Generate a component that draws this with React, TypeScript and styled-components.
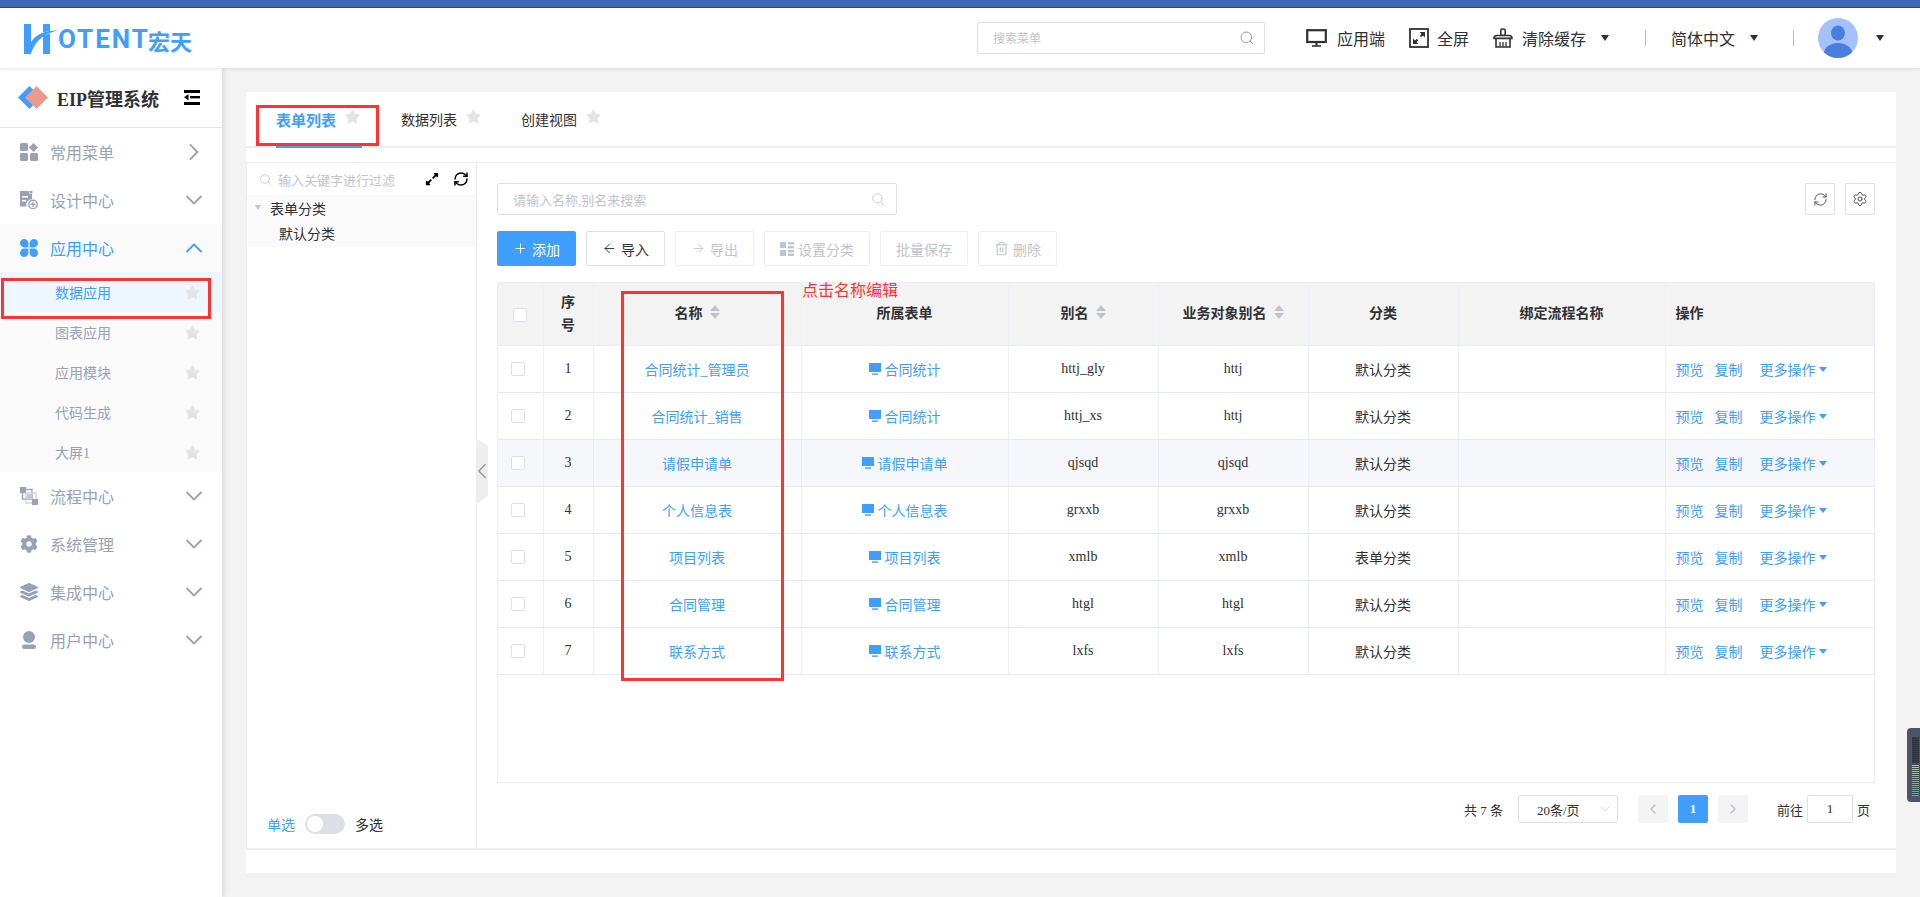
import React from "react";
import styled, { createGlobalStyle } from "styled-components";
import {
  ArrowLeft,
  ArrowRight,
  ChevronDown,
  ChevronLeft,
  ChevronRight,
  ChevronUp,
  Plus,
  RefreshCw,
  Search,
  Settings,
  Trash2,
} from "lucide-react";
import { FaCog, FaExpandAlt, FaLayerGroup, FaStar } from "react-icons/fa";

const GlobalStyle = createGlobalStyle`
  html, body {
    margin: 0;
    padding: 0;
    background: #f3f3f3;
    overflow: hidden;
  }
  * {
    box-sizing: border-box;
  }
  body {
    font-family: "Liberation Serif", "Noto Sans CJK SC", serif;
    font-size: 14px;
    color: #303133;
  }
`;

const rows = [
  { no: 1, name: "合同统计_管理员", form: "合同统计", alias: "httj_gly", biz: "httj", cat: "默认分类" },
  { no: 2, name: "合同统计_销售", form: "合同统计", alias: "httj_xs", biz: "httj", cat: "默认分类" },
  { no: 3, name: "请假申请单", form: "请假申请单", alias: "qjsqd", biz: "qjsqd", cat: "默认分类", hover: true },
  { no: 4, name: "个人信息表", form: "个人信息表", alias: "grxxb", biz: "grxxb", cat: "默认分类" },
  { no: 5, name: "项目列表", form: "项目列表", alias: "xmlb", biz: "xmlb", cat: "表单分类" },
  { no: 6, name: "合同管理", form: "合同管理", alias: "htgl", biz: "htgl", cat: "默认分类" },
  { no: 7, name: "联系方式", form: "联系方式", alias: "lxfs", biz: "lxfs", cat: "默认分类" },
];

const CommonIcon = () => (
  <svg width="18" height="18" viewBox="0 0 18 18" fill="#98a1b5">
    <rect x="0" y="0" width="8" height="8" rx="1.5" />
    <path d="M13.5 0 18 4.5 13.5 9 9 4.5Z" />
    <rect x="0" y="10" width="8" height="8" rx="1.5" />
    <rect x="10" y="10" width="8" height="8" rx="1.5" />
  </svg>
);

const DesignIcon = () => (
  <svg width="18" height="18" viewBox="0 0 18 18" fill="#98a1b5">
    <path d="M0 0H9V2.5H12V8.2A5.5 5.5 0 0 0 6.6 15.5H0Z" />
    <rect x="9.5" y="0" width="3" height="2" />
    <rect x="2" y="5" width="6" height="1.6" fill="#fff" />
    <rect x="2" y="9" width="4" height="1.6" fill="#fff" />
    <circle cx="13" cy="13.4" r="4.2" fill="#fff" stroke="#98a1b5" strokeWidth="1.4" />
    <path d="M13 11v5M10.6 13.4h4.8" stroke="#98a1b5" strokeWidth="1.3" />
  </svg>
);

const AppIcon = () => (
  <svg width="18" height="18" viewBox="0 0 18 18" fill="#409eff">
    <path d="M4 0C6.4 0 8.4 2 8.4 4.2V8.4H4.2C2 8.4 0 6.4 0 4 0 1.8 1.8 0 4 0Z" />
    <path d="M14 0C11.6 0 9.6 2 9.6 4.2V8.4H13.8C16 8.4 18 6.4 18 4 18 1.8 16.2 0 14 0Z" />
    <path d="M4 18C6.4 18 8.4 16 8.4 13.8V9.6H4.2C2 9.6 0 11.6 0 14 0 16.2 1.8 18 4 18Z" />
    <path d="M14 18C11.6 18 9.6 16 9.6 13.8V9.6H13.8C16 9.6 18 11.6 18 14 18 16.2 16.2 18 14 18Z" />
  </svg>
);

const FlowIcon = () => (
  <svg width="18" height="18" viewBox="0 0 18 18" fill="none">
    <rect x="0" y="0" width="6" height="6" fill="#98a1b5" />
    <rect x="2.5" y="2.5" width="9.5" height="9.5" stroke="#98a1b5" strokeWidth="1.4" />
    <rect x="7" y="7" width="5" height="5" fill="#c5cad6" />
    <rect x="6" y="6" width="10" height="10" stroke="#c5cad6" strokeWidth="1.2" />
    <rect x="12" y="12" width="6" height="6" fill="#98a1b5" />
  </svg>
);

const UserIcon = () => (
  <svg width="18" height="18" viewBox="0 0 18 18" fill="#98a1b5">
    <circle cx="9" cy="6" r="6" />
    <rect x="2" y="13.4" width="14" height="4.6" rx="2.3" />
  </svg>
);

const LogoH = () => (
  <svg width="34" height="30" viewBox="0 0 34 30" fill="#409eff">
    <path d="M0 0H7V30H0Z" />
    <path d="M7 18C12 10 22 6 34 6.5C26 8 12 13 7 30Z" />
    <path d="M19 0H26V7L19 8.6Z" />
    <path d="M19 11.4 26 9.4V30H19Z" />
  </svg>
);

const Diamonds = () => (
  <svg width="30" height="23" viewBox="0 0 30 23">
    <path d="M11.5 0 23 11.5 11.5 23 0 11.5Z" fill="#409eff" />
    <path d="M18.5 0 30 11.5 18.5 23 7 11.5Z" fill="#eb9a8e" />
  </svg>
);

const FoldIcon = () => (
  <svg width="16" height="15" viewBox="0 0 16 15" fill="#000">
    <rect x="0" y="0" width="16" height="3" />
    <rect x="6" y="6" width="10" height="2.4" />
    <path d="M0 7.2 4.5 4V10.4Z" />
    <rect x="0" y="12" width="16" height="3" />
  </svg>
);

const MonitorIcon = () => (
  <svg width="21" height="18" viewBox="0 0 21 18" fill="none">
    <rect x="1.2" y="1.2" width="18.6" height="11.8" stroke="#303133" strokeWidth="2.2" />
    <path d="M10.5 14v2.5" stroke="#303133" strokeWidth="2.2" />
    <path d="M6 17h9" stroke="#303133" strokeWidth="1.6" />
  </svg>
);

const FullIcon = () => (
  <svg width="20" height="20" viewBox="0 0 20 20" fill="none">
    <rect x="1" y="1" width="18" height="18" stroke="#303133" strokeWidth="1.8" />
    <path d="M8.5 11.5 5.5 14.5M11.5 8.5l3-3" stroke="#303133" strokeWidth="2" />
    <path d="M4 10.5V16H9.5ZM16 9.5V4H10.5Z" fill="#303133" />
  </svg>
);

const BrushIcon = () => (
  <svg width="20" height="20" viewBox="0 0 20 20" fill="none" stroke="#303133" strokeWidth="1.6">
    <rect x="7.8" y="1" width="4.4" height="6.5" rx="1.6" />
    <path d="M1 10.4C1 8.4 2.4 7.5 4 7.5H16C17.6 7.5 19 8.4 19 10.4Z" fill="#fff" />
    <path d="M3 10.4V19H17V10.4" />
    <path d="M7 14V18.5M10 14V18.5M13 14V18.5" strokeWidth="1.3" />
  </svg>
);

const AvatarIcon = () => (
  <svg width="40" height="40" viewBox="0 0 40 40">
    <clipPath id="avatarClip">
      <circle cx="20" cy="20" r="20" />
    </clipPath>
    <g clipPath="url(#avatarClip)">
      <rect width="40" height="40" fill="#a3c2fb" />
      <ellipse cx="20" cy="15" rx="7" ry="7.5" fill="#4a7de0" />
      <ellipse cx="20" cy="35" rx="14" ry="10" fill="#4a7de0" />
    </g>
  </svg>
);

const GridIcon = () => (
  <svg width="14" height="14" viewBox="0 0 14 14" fill="#c0c4cc">
    <rect x="0" y="0" width="6" height="6" />
    <rect x="0" y="8" width="6" height="6" />
    <rect x="8" y="0" width="6" height="2.4" />
    <rect x="8" y="4" width="6" height="2.4" />
    <rect x="8" y="8" width="6" height="2.4" />
    <rect x="8" y="11.6" width="6" height="2.4" />
  </svg>
);

const ScreenIcon = () => (
  <svg width="12" height="12" viewBox="0 0 12 12" fill="#409eff">
    <rect x="0" y="0" width="12" height="9" />
    <rect x="3" y="10.4" width="6" height="1.4" />
  </svg>
);

const menuTop = [
  { label: "常用菜单", icon: <CommonIcon />, arrow: "right" },
  { label: "设计中心", icon: <DesignIcon />, arrow: "down" },
  { label: "应用中心", icon: <AppIcon />, arrow: "up", active: true },
];

const menuSub = ["数据应用", "图表应用", "应用模块", "代码生成", "大屏1"];

const menuBottom = [
  { label: "流程中心", icon: <FlowIcon /> },
  { label: "系统管理", icon: <FaCog size={18} color="#98a1b5" /> },
  { label: "集成中心", icon: <FaLayerGroup size={18} color="#98a1b5" /> },
  { label: "用户中心", icon: <UserIcon /> },
];

const App = () => {
  return (
    <Page>
      <GlobalStyle />
      <TopStrip />
      <Header>
        <Logo>
          <LogoH />
          <LogoLatin>OTENT</LogoLatin>
          <LogoCjk>宏天</LogoCjk>
        </Logo>
        <HeaderRight>
          <MenuSearch>
            <span>搜索菜单</span>
            <Search size={16} color="#909399" strokeWidth={1.4} />
          </MenuSearch>
          <HeaderItem $left={41} $gap={10}>
            <MonitorIcon />
            应用端
          </HeaderItem>
          <HeaderItem $left={24} $gap={8}>
            <FullIcon />
            全屏
          </HeaderItem>
          <HeaderItem $left={24} $gap={9}>
            <BrushIcon />
            清除缓存
          </HeaderItem>
          <HeaderCaret $left={15} />
          <HeaderDivider $left={36} />
          <HeaderItem $left={25} $gap={0}>
            简体中文
          </HeaderItem>
          <HeaderCaret $left={15} />
          <HeaderDivider $left={35} />
          <AvatarBox>
            <AvatarIcon />
          </AvatarBox>
          <HeaderCaret $left={18} />
        </HeaderRight>
      </Header>
      <Body>
        <Sidebar>
          <SideTitle>
            <Diamonds />
            <SideName>EIP管理系统</SideName>
            <FoldIcon />
          </SideTitle>
          {menuTop.map((m) => (
            <MenuRow key={m.label} $active={m.active}>
              <MenuIcon>{m.icon}</MenuIcon>
              <MenuLabel>{m.label}</MenuLabel>
              <MenuArrow $active={m.active}>
                {m.arrow === "right" && <ChevronRight size={28} strokeWidth={1.6} />}
                {m.arrow === "down" && <ChevronDown size={28} strokeWidth={1.6} />}
                {m.arrow === "up" && <ChevronUp size={28} strokeWidth={1.6} />}
              </MenuArrow>
            </MenuRow>
          ))}
          <SubMenu>
            {menuSub.map((s, i) => (
              <SubRow key={s} $active={i === 0}>
                <SubLabel>{s}</SubLabel>
                <FaStar size={15} color="#e3e3e3" />
                {i === 0 && <SideRedBox />}
              </SubRow>
            ))}
          </SubMenu>
          {menuBottom.map((m) => (
            <MenuRow key={m.label}>
              <MenuIcon>{m.icon}</MenuIcon>
              <MenuLabel>{m.label}</MenuLabel>
              <MenuArrow>
                <ChevronDown size={28} strokeWidth={1.6} />
              </MenuArrow>
            </MenuRow>
          ))}
        </Sidebar>
        <Main>
          <Panel>
            <Tabs>
              <Tab $active>
                表单列表
                <FaStar size={15} color="#e3e3e3" />
                <TabRedBox />
              </Tab>
              <Tab>
                数据列表
                <FaStar size={15} color="#e3e3e3" />
              </Tab>
              <Tab>
                创建视图
                <FaStar size={15} color="#e3e3e3" />
              </Tab>
            </Tabs>
            <Split>
              <TreePane>
                <TreeSearch>
                  <Search size={13} color="#c0c4cc" strokeWidth={1.5} />
                  <TreePlaceholder>输入关键字进行过滤</TreePlaceholder>
                  <FaExpandAlt size={14} color="#000" />
                  <RefreshCw size={16} color="#000" strokeWidth={2.2} />
                </TreeSearch>
                <TreeList>
                  <TreeNode>
                    <TreeCaret />
                    表单分类
                  </TreeNode>
                  <TreeChild>默认分类</TreeChild>
                </TreeList>
                <SwitchRow>
                  <SwitchLabel $on>单选</SwitchLabel>
                  <SwitchTrack>
                    <SwitchKnob />
                  </SwitchTrack>
                  <SwitchLabel>多选</SwitchLabel>
                </SwitchRow>
                <Collapse>
                  <ChevronLeft size={26} color="#999" strokeWidth={1.3} />
                </Collapse>
              </TreePane>
              <ListPane>
                <SearchRow>
                  <ListSearch>
                    <span>请输入名称,别名来搜索</span>
                    <Search size={14} color="#c0c4cc" strokeWidth={1.5} />
                  </ListSearch>
                  <ToolButton>
                    <RefreshCw size={15} color="#505255" strokeWidth={1.6} />
                  </ToolButton>
                  <ToolButton>
                    <Settings size={16} color="#505255" strokeWidth={1.5} />
                  </ToolButton>
                </SearchRow>
                <ActionRow>
                  <ActionButton $kind="primary">
                    <Plus size={15} strokeWidth={1.6} />
                    添加
                  </ActionButton>
                  <ActionButton $kind="plain">
                    <ArrowLeft size={15} strokeWidth={1.5} />
                    导入
                  </ActionButton>
                  <ActionButton>
                    <ArrowRight size={15} strokeWidth={1.5} />
                    导出
                  </ActionButton>
                  <ActionButton>
                    <GridIcon />
                    设置分类
                  </ActionButton>
                  <ActionButton>批量保存</ActionButton>
                  <ActionButton>
                    <Trash2 size={15} strokeWidth={1.8} />
                    删除
                  </ActionButton>
                </ActionRow>
                <TableFrame>
                  <Table>
                    <colgroup>
                      <col style={{ width: 45 }} />
                      <col style={{ width: 50 }} />
                      <col style={{ width: 208 }} />
                      <col style={{ width: 207 }} />
                      <col style={{ width: 150 }} />
                      <col style={{ width: 150 }} />
                      <col style={{ width: 150 }} />
                      <col style={{ width: 207 }} />
                      <col />
                    </colgroup>
                    <thead>
                      <tr>
                        <Th>
                          <Check $head />
                        </Th>
                        <Th>
                          序<br />号
                        </Th>
                        <Th>
                          名称
                          <SortIcon />
                        </Th>
                        <Th>所属表单</Th>
                        <Th>
                          别名
                          <SortIcon />
                        </Th>
                        <Th>
                          业务对象别名
                          <SortIcon />
                        </Th>
                        <Th>分类</Th>
                        <Th>绑定流程名称</Th>
                        <Th $left>操作</Th>
                      </tr>
                    </thead>
                    <tbody>
                      {rows.map((r) => (
                        <Tr key={r.no} $hover={r.hover}>
                          <Td>
                            <Check />
                          </Td>
                          <Td>{r.no}</Td>
                          <Td>
                            <LinkText>{r.name}</LinkText>
                          </Td>
                          <Td>
                            <FormLink>
                              <ScreenIcon />
                              {r.form}
                            </FormLink>
                          </Td>
                          <Td>{r.alias}</Td>
                          <Td>{r.biz}</Td>
                          <Td>{r.cat}</Td>
                          <Td />
                          <Td $left>
                            <OpLinks>
                              <LinkText>预览</LinkText>
                              <LinkText>复制</LinkText>
                              <MoreLink>
                                更多操作
                                <BlueCaret />
                              </MoreLink>
                            </OpLinks>
                          </Td>
                        </Tr>
                      ))}
                    </tbody>
                  </Table>
                  <NameRedBox />
                  <RedNote>点击名称编辑</RedNote>
                </TableFrame>
                <Pager>
                  <PagerText>共 7 条</PagerText>
                  <SizeSelect>
                    <span>20条/页</span>
                    <ChevronDown size={14} color="#c0c4cc" strokeWidth={1.4} />
                  </SizeSelect>
                  <PageBtn>
                    <ChevronLeft size={16} color="#c0c4cc" strokeWidth={2.4} />
                  </PageBtn>
                  <PageBtn $active>1</PageBtn>
                  <PageBtn>
                    <ChevronRight size={16} color="#c0c4cc" strokeWidth={2.4} />
                  </PageBtn>
                  <PagerGoto>前往</PagerGoto>
                  <PageInput>1</PageInput>
                  <PagerText>页</PagerText>
                </Pager>
              </ListPane>
            </Split>
          </Panel>
        </Main>
      </Body>
      <FloatMeter>
        <MeterBars />
      </FloatMeter>
    </Page>
  );
};

const Page = styled.div`
  width: 1920px;
  height: 897px;
  display: flex;
  flex-direction: column;
  overflow: hidden;
`;

const TopStrip = styled.div`
  height: 8px;
  background: #3f67b5;
  border-bottom: 1px solid #234a93;
`;

const Header = styled.header`
  position: relative;
  z-index: 2;
  height: 60px;
  display: flex;
  align-items: center;
  justify-content: space-between;
  padding: 0 36px 0 24px;
  background: #fff;
  box-shadow: 0 1px 4px rgba(0, 0, 0, 0.1);
`;

const Logo = styled.div`
  display: flex;
  align-items: flex-end;
  height: 32px;
`;

const LogoLatin = styled.span`
  font-family: Roboto, sans-serif;
  font-weight: 700;
  font-size: 26px;
  line-height: 30px;
  letter-spacing: 2px;
  color: #409eff;
`;

const LogoCjk = styled.span`
  font-family: "Noto Sans CJK SC", sans-serif;
  font-weight: 700;
  font-size: 22px;
  line-height: 28px;
  margin-left: -2px;
  color: #409eff;
`;

const HeaderRight = styled.div`
  display: flex;
  align-items: center;
`;

const MenuSearch = styled.div`
  width: 288px;
  height: 32px;
  display: flex;
  align-items: center;
  justify-content: space-between;
  padding: 0 9px 0 15px;
  border: 1px solid #dcdfe6;
  border-radius: 2px;
  font-size: 12px;
  color: #c0c4cc;
`;

const HeaderItem = styled.div<{ $left: number; $gap: number }>`
  display: flex;
  align-items: center;
  gap: ${(p) => p.$gap}px;
  margin-left: ${(p) => p.$left}px;
  font-size: 16px;
  color: #303133;
`;

const HeaderCaret = styled.i<{ $left: number }>`
  margin-left: ${(p) => p.$left}px;
  width: 0;
  height: 0;
  border-left: 4.5px solid transparent;
  border-right: 4.5px solid transparent;
  border-top: 6px solid #303133;
`;

const HeaderDivider = styled.i<{ $left: number }>`
  margin-left: ${(p) => p.$left}px;
  width: 1px;
  height: 16px;
  background: #bbb;
`;

const AvatarBox = styled.div`
  margin-left: 24px;
  width: 40px;
  height: 40px;
`;

const Body = styled.div`
  flex: 1;
  display: flex;
  min-height: 0;
`;

const Sidebar = styled.aside`
  position: relative;
  z-index: 1;
  width: 222px;
  flex: none;
  background: #fff;
  box-shadow: 2px 0 5px rgba(0, 0, 0, 0.1);
`;

const SideTitle = styled.div`
  height: 60px;
  display: flex;
  align-items: center;
  padding: 0 22px 0 18px;
  border-bottom: 1px solid #e4e4e4;
`;

const SideName = styled.div`
  flex: 1;
  margin-left: 9px;
  font-size: 18px;
  font-weight: 700;
  color: #303133;
`;

const MenuRow = styled.div<{ $active?: boolean }>`
  height: 48px;
  display: flex;
  align-items: center;
  padding: 0 14px 0 20px;
  font-size: 16px;
  color: ${(p) => (p.$active ? "#409eff" : "#98a1b5")};
  background: ${(p) => (p.$active ? "#fafafa" : "#fff")};
`;

const MenuIcon = styled.span`
  display: flex;
  width: 18px;
  height: 18px;
`;

const MenuLabel = styled.span`
  flex: 1;
  margin-left: 12px;
`;

const MenuArrow = styled.span<{ $active?: boolean }>`
  display: flex;
  color: ${(p) => (p.$active ? "#409eff" : "#98a1b5")};
`;

const SubMenu = styled.div`
  background: #fafafa;
`;

const SubRow = styled.div<{ $active?: boolean }>`
  position: relative;
  height: 40px;
  display: flex;
  align-items: center;
  padding: 0 22px 0 55px;
  color: ${(p) => (p.$active ? "#409eff" : "#98a1b5")};
  background: ${(p) => (p.$active ? "#eef6ff" : "transparent")};
`;

const SubLabel = styled.span`
  flex: 1;
`;

const SideRedBox = styled.i`
  position: absolute;
  left: 1px;
  top: 6px;
  width: 210px;
  height: 41px;
  border: 3px solid #f33;
`;

const Main = styled.main`
  flex: 1;
  min-width: 0;
  padding: 24px 24px 24px;
`;

const Panel = styled.section`
  background: #fff;
  height: 781px;
`;

const Tabs = styled.nav`
  height: 56px;
  display: flex;
  gap: 39px;
  padding-left: 30px;
  border-bottom: 2px solid #eee;
`;

const Tab = styled.div<{ $active?: boolean }>`
  position: relative;
  display: flex;
  align-items: center;
  gap: 9px;
  height: 56px;
  padding-right: ${(p) => (p.$active ? "2px" : "1px")};
  font-size: ${(p) => (p.$active ? "15px" : "14px")};
  font-weight: ${(p) => (p.$active ? 700 : 400)};
  color: ${(p) => (p.$active ? "#409eff" : "#303133")};
  border-bottom: 2px solid ${(p) => (p.$active ? "#409eff" : "transparent")};

  svg {
    margin-top: -6px;
  }
`;

const TabRedBox = styled.i`
  position: absolute;
  left: -20px;
  top: 13px;
  width: 123px;
  height: 41px;
  border: 3px solid #f33;
`;

const Split = styled.div`
  display: flex;
  height: 688px;
  margin-top: 14px;
  border-top: 1px solid #eee;
  border-bottom: 2px solid #eee;
`;

const TreePane = styled.div`
  position: relative;
  width: 231px;
  flex: none;
  display: flex;
  flex-direction: column;
  border-left: 1px solid #eee;
  border-right: 1px solid #e8e8ee;
`;

const TreeSearch = styled.div`
  height: 32px;
  display: flex;
  align-items: center;
  padding: 0 7px 0 12px;
  color: #c0c4cc;
  font-size: 13px;

  svg:last-child {
    margin-left: 14px;
  }
`;

const TreePlaceholder = styled.span`
  flex: 1;
  margin-left: 6px;
`;

const TreeList = styled.div`
  background: #fafafa;
`;

const TreeNode = styled.div`
  height: 26px;
  display: flex;
  align-items: center;
  gap: 9px;
  padding: 0 0 1px 8px;
`;

const TreeCaret = styled.i`
  width: 0;
  height: 0;
  border-left: 3.5px solid transparent;
  border-right: 3.5px solid transparent;
  border-top: 5px solid #c0c4cc;
`;

const TreeChild = styled.div`
  height: 26px;
  line-height: 28px;
  padding-left: 32px;
`;

const SwitchRow = styled.div`
  margin-top: auto;
  display: flex;
  align-items: center;
  gap: 10px;
  padding: 0 0 14px 20px;
`;

const SwitchLabel = styled.span<{ $on?: boolean }>`
  color: ${(p) => (p.$on ? "#409eff" : "#303133")};
`;

const SwitchTrack = styled.div`
  width: 40px;
  height: 20px;
  padding: 2px;
  border-radius: 10px;
  background: #dcdfe6;
`;

const SwitchKnob = styled.div`
  width: 16px;
  height: 16px;
  border-radius: 50%;
  background: #fff;
`;

const Collapse = styled.div`
  position: absolute;
  left: 100%;
  top: 275px;
  width: 12px;
  height: 66px;
  display: flex;
  align-items: center;
  justify-content: center;
  background: #eee;
  clip-path: polygon(0 0, 100% 8px, 100% calc(100% - 8px), 0 100%);

  svg {
    flex: none;
  }
`;

const ListPane = styled.div`
  flex: 1;
  min-width: 0;
  padding: 20px 21px 0 20px;
`;

const SearchRow = styled.div`
  display: flex;
  gap: 10px;
`;

const ListSearch = styled.div`
  width: 400px;
  height: 32px;
  margin-right: auto;
  display: flex;
  align-items: center;
  justify-content: space-between;
  padding: 0 11px 0 15px;
  border: 1px solid #dcdfe6;
  border-radius: 2px;
  font-size: 13px;
  color: #c0c4cc;
`;

const ToolButton = styled.div`
  width: 30px;
  height: 32px;
  display: flex;
  align-items: center;
  justify-content: center;
  border: 1px solid #dcdfe6;
  border-radius: 2px;
`;

const ActionRow = styled.div`
  display: flex;
  gap: 10px;
  margin-top: 16px;
`;

const ActionButton = styled.button<{ $kind?: "primary" | "plain" }>`
  height: 35px;
  display: flex;
  align-items: center;
  justify-content: center;
  gap: 4px;
  padding: 0 15px;
  font: inherit;
  border-radius: 2px;
  border: 1px solid
    ${(p) =>
      p.$kind === "primary" ? "#409eff" : p.$kind === "plain" ? "#dcdfe6" : "#ebeef5"};
  background: ${(p) => (p.$kind === "primary" ? "#409eff" : "#fff")};
  color: ${(p) =>
    p.$kind === "primary" ? "#fff" : p.$kind === "plain" ? "#303133" : "#c0c4cc"};
`;

const TableFrame = styled.div`
  position: relative;
  height: 501px;
  margin-top: 16px;
  border: 1px solid #ebeef5;
`;

const Table = styled.table`
  width: 100%;
  table-layout: fixed;
  border-collapse: collapse;
`;

const Th = styled.th<{ $left?: boolean }>`
  height: 62px;
  padding: 0 ${(p) => (p.$left ? "10px" : "0")};
  background: #f3f3f3;
  font-size: 14px;
  line-height: 23px;
  font-weight: 700;
  color: #303133;
  text-align: ${(p) => (p.$left ? "left" : "center")};
  border-bottom: 1px solid #ebeef5;
  border-right: 1px solid #ebeef5;

  &:last-child {
    border-right: none;
  }
`;

const Tr = styled.tr<{ $hover?: boolean }>`
  background: ${(p) => (p.$hover ? "#f5f7fa" : "#fff")};
`;

const Td = styled.td<{ $left?: boolean }>`
  height: 47px;
  padding: 0 ${(p) => (p.$left ? "10px" : "0")};
  text-align: ${(p) => (p.$left ? "left" : "center")};
  border-bottom: 1px solid #e6e8ef;
  border-right: 1px solid #ebeef5;
  color: #303133;

  &:last-child {
    border-right: none;
  }
`;

const Check = styled.span<{ $head?: boolean }>`
  display: inline-block;
  vertical-align: middle;
  width: 14px;
  height: 14px;
  margin-left: ${(p) => (p.$head ? "0" : "-4px")};
  background: #fff;
  border: 1px solid #dcdfe6;
  border-radius: 2px;
`;

const SortIcon = styled.i`
  display: inline-block;
  vertical-align: -1px;
  position: relative;
  width: 10px;
  height: 14px;
  margin-left: 7px;

  &::before,
  &::after {
    content: "";
    position: absolute;
    left: 0;
    border-left: 5px solid transparent;
    border-right: 5px solid transparent;
  }
  &::before {
    top: 0;
    border-bottom: 6px solid #c0c4cc;
  }
  &::after {
    bottom: 0;
    border-top: 6px solid #c0c4cc;
  }
`;

const LinkText = styled.span`
  color: #409eff;
`;

const FormLink = styled.span`
  display: inline-flex;
  align-items: center;
  gap: 4px;
  color: #409eff;
`;

const OpLinks = styled.div`
  display: flex;
  gap: 11px;
  white-space: nowrap;
`;

const MoreLink = styled.span`
  display: inline-flex;
  align-items: center;
  gap: 3px;
  margin-left: 6px;
  color: #409eff;
`;

const BlueCaret = styled.i`
  width: 0;
  height: 0;
  margin-top: 2px;
  border-left: 4px solid transparent;
  border-right: 4px solid transparent;
  border-top: 5px solid #409eff;
`;

const NameRedBox = styled.i`
  position: absolute;
  left: 123px;
  top: 8px;
  width: 163px;
  height: 390px;
  border: 3px solid #f33;
`;

const RedNote = styled.span`
  position: absolute;
  left: 304px;
  top: -3px;
  font-size: 16px;
  line-height: 22px;
  color: #f33;
`;

const Pager = styled.div`
  display: flex;
  align-items: center;
  justify-content: flex-end;
  gap: 10px;
  margin-top: 12px;
  padding-right: 5px;
  font-size: 13px;
`;

const PagerText = styled.span`
  color: #303133;
`;

const SizeSelect = styled.div`
  width: 100px;
  height: 28px;
  margin: 0 10px 0 5px;
  display: flex;
  align-items: center;
  justify-content: space-between;
  padding: 0 5px 0 18px;
  border: 1px solid #dcdfe6;
  border-radius: 3px;
`;

const PageBtn = styled.div<{ $active?: boolean }>`
  width: 30px;
  height: 28px;
  display: flex;
  align-items: center;
  justify-content: center;
  border-radius: 2px;
  font-weight: 700;
  background: ${(p) => (p.$active ? "#409eff" : "#f4f4f5")};
  color: #fff;
`;

const PagerGoto = styled.span`
  margin-left: 19px;
  margin-right: -6px;
`;

const PageInput = styled.div`
  width: 46px;
  height: 28px;
  margin-right: -6px;
  display: flex;
  align-items: center;
  justify-content: center;
  border: 1px solid #dcdfe6;
  border-radius: 2px;
`;

const FloatMeter = styled.div`
  position: fixed;
  right: 0;
  top: 728px;
  width: 13px;
  height: 74px;
  padding: 9px 1px 6px 5px;
  background: #4d5463;
  border-radius: 4px 0 0 4px;
`;

const MeterBars = styled.div`
  width: 100%;
  height: 100%;
  background: repeating-linear-gradient(
      to bottom,
      transparent 0,
      transparent 1px,
      rgba(40, 44, 54, 0.8) 1px,
      rgba(40, 44, 54, 0.8) 2px
    ),
    linear-gradient(to bottom, #3a3f4c 0 44%, #b8d070 48%, #7fc09a 70%, #3fbfa0 100%);
`;

export default App;
